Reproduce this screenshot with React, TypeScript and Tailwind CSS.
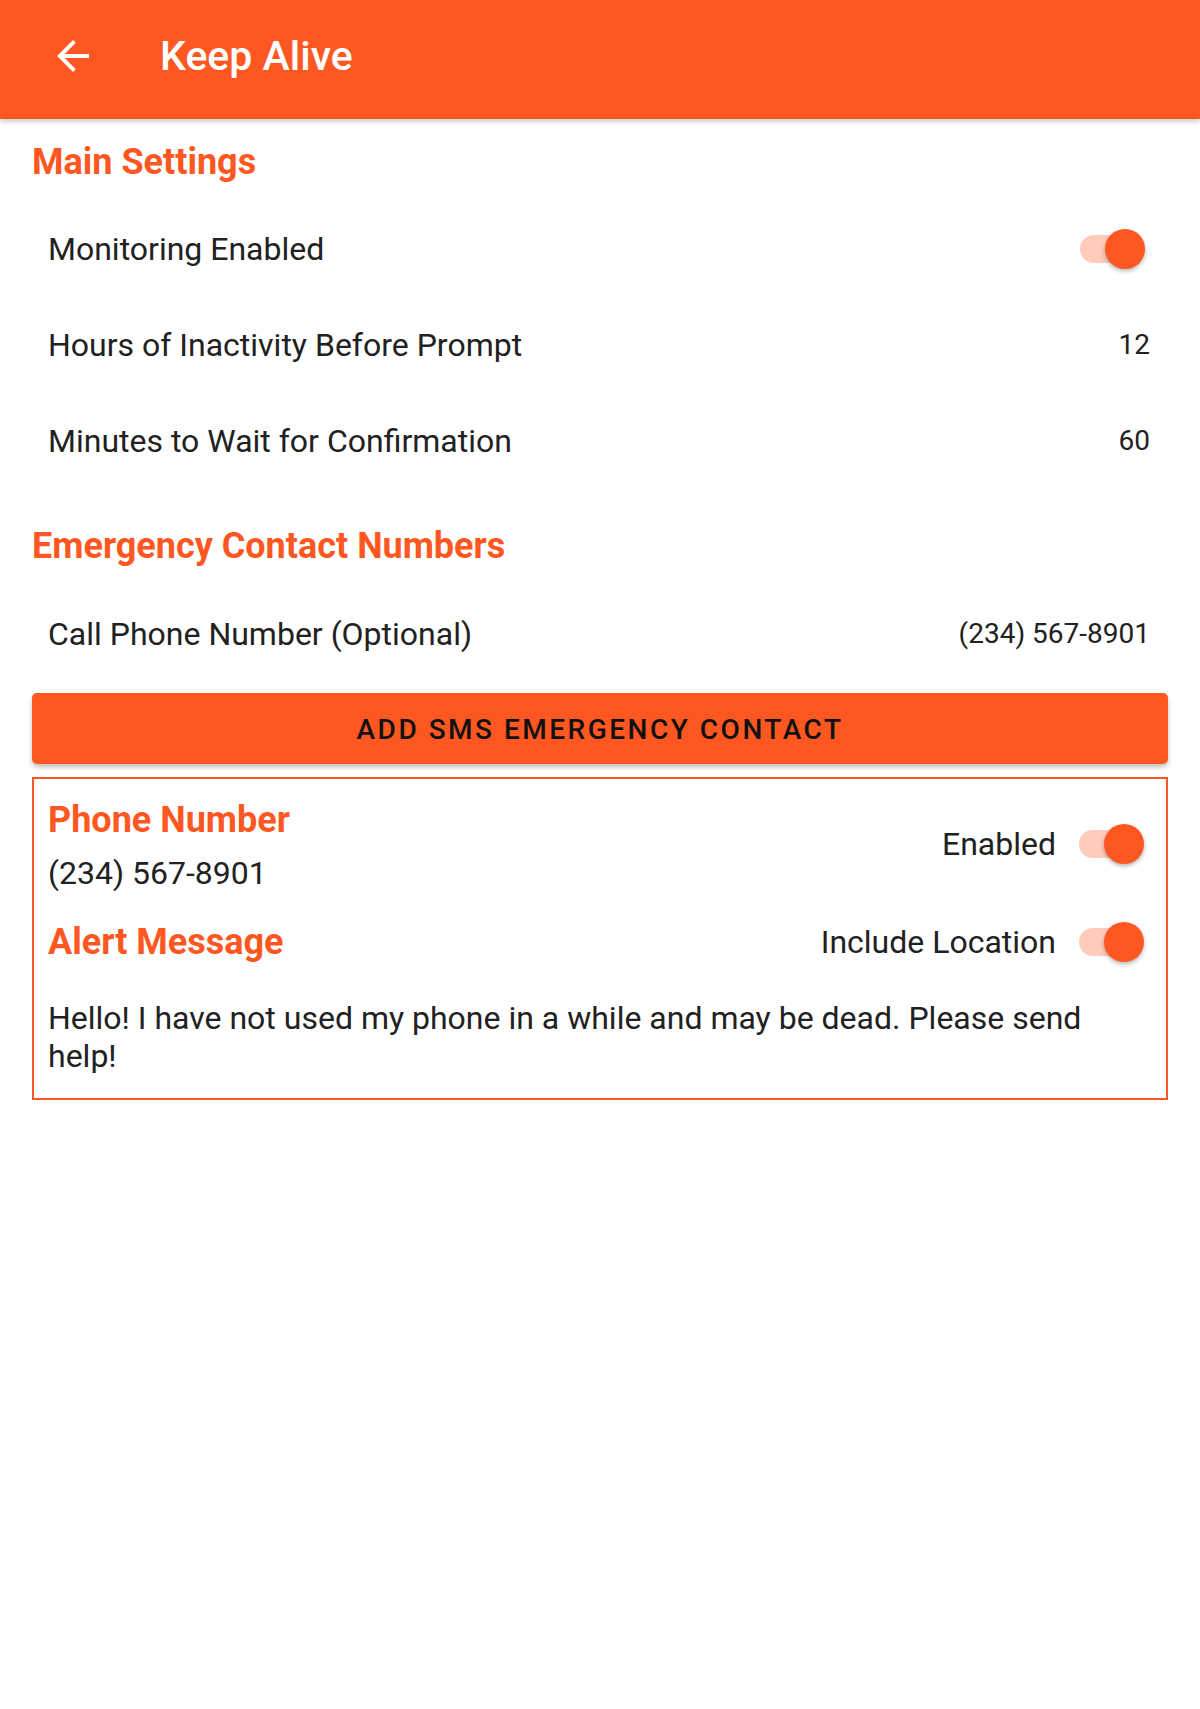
import React from "react";

function Toggle() {
  return (
    <div className="relative w-[65px] h-[40px] shrink-0">
      <div className="absolute left-0 top-[6px] w-[60px] h-[28px] rounded-full bg-[#ffccbc]" />
      <div className="absolute right-0 top-0 w-[40px] h-[40px] rounded-full bg-[#ff5722] shadow-[0_2px_4px_rgba(0,0,0,0.3)]" />
    </div>
  );
}

function Row({ label, children, pr }: { label: string; children: React.ReactNode; pr: string }) {
  return (
    <div className={`flex items-center justify-between h-[96px] pl-[48px] ${pr}`}>
      <span className="text-[32px] leading-[40px] text-[#212121]">{label}</span>
      {children}
    </div>
  );
}

export default function App() {
  return (
    <div className="min-h-[1709px] bg-white" style={{ fontFamily: "Roboto, 'Noto Sans', sans-serif" }}>
      <header className="relative z-10 h-[119px] bg-[#ff5722] flex items-center pl-[49px] pb-[7px] shadow-[0_2px_6px_rgba(0,0,0,0.25)]">
        <svg viewBox="0 0 24 24" className="w-[48px] h-[48px]" fill="white">
          <path d="M20 11H7.83l5.59-5.59L12 4l-8 8 8 8 1.41-1.41L7.83 13H20v-2z" />
        </svg>
        <h1 className="ml-[63px] text-[41px] leading-[48px] font-medium text-white">Keep Alive</h1>
      </header>

      <div className="h-[82px] pt-[22px] pl-[32px]">
        <h2 className="text-[36px] leading-[42px] font-bold text-[#ff5722]">Main Settings</h2>
      </div>

      <Row label="Monitoring Enabled" pr="pr-[55px]">
        <Toggle />
      </Row>
      <Row label="Hours of Inactivity Before Prompt" pr="pr-[50px]">
        <span className="text-[28px] text-[#212121]">12</span>
      </Row>
      <Row label="Minutes to Wait for Confirmation" pr="pr-[50px]">
        <span className="text-[28px] text-[#212121]">60</span>
      </Row>

      <div className="h-[97px] pt-[36px] pl-[32px]">
        <h2 className="text-[36px] leading-[42px] font-bold text-[#ff5722]">Emergency Contact Numbers</h2>
      </div>

      <Row label="Call Phone Number (Optional)" pr="pr-[50px]">
        <span className="text-[28px] text-[#212121]">(234) 567-8901</span>
      </Row>

      <div className="px-[32px]">
        <button className="mt-[11px] w-full h-[71px] rounded-[5px] bg-[#ff5722] shadow-[0_3px_5px_rgba(0,0,0,0.25)] flex items-center justify-center pt-[3px]">
          <span className="text-[28px] font-medium tracking-[2.5px] text-[#111]">ADD SMS EMERGENCY CONTACT</span>
        </button>

        <div className="mt-[13px] border-2 border-[#ff5722] pl-[14px] pr-[22px] pt-[20px] pb-[23px]">
          <div className="flex items-center justify-between">
            <div>
              <div className="text-[36px] leading-[42px] font-bold text-[#ff5722]">Phone Number</div>
              <div className="mt-[12px] text-[32px] leading-[40px] text-[#212121]">(234) 567-8901</div>
            </div>
            <div className="flex items-center gap-[23px] -mt-[4px]">
              <span className="text-[32px] leading-[40px] text-[#212121]">Enabled</span>
              <Toggle />
            </div>
          </div>
          <div className="mt-[28px] h-[42px] flex items-center justify-between">
            <div className="text-[36px] leading-[42px] font-bold text-[#ff5722]">Alert Message</div>
            <div className="flex items-center gap-[23px]">
              <span className="text-[32px] leading-[40px] text-[#212121]">Include Location</span>
              <Toggle />
            </div>
          </div>
          <p className="mt-[36px] text-[32px] leading-[38px] text-[#212121]">
            Hello! I have not used my phone in a while and may be dead. Please send help!
          </p>
        </div>
      </div>
    </div>
  );
}
